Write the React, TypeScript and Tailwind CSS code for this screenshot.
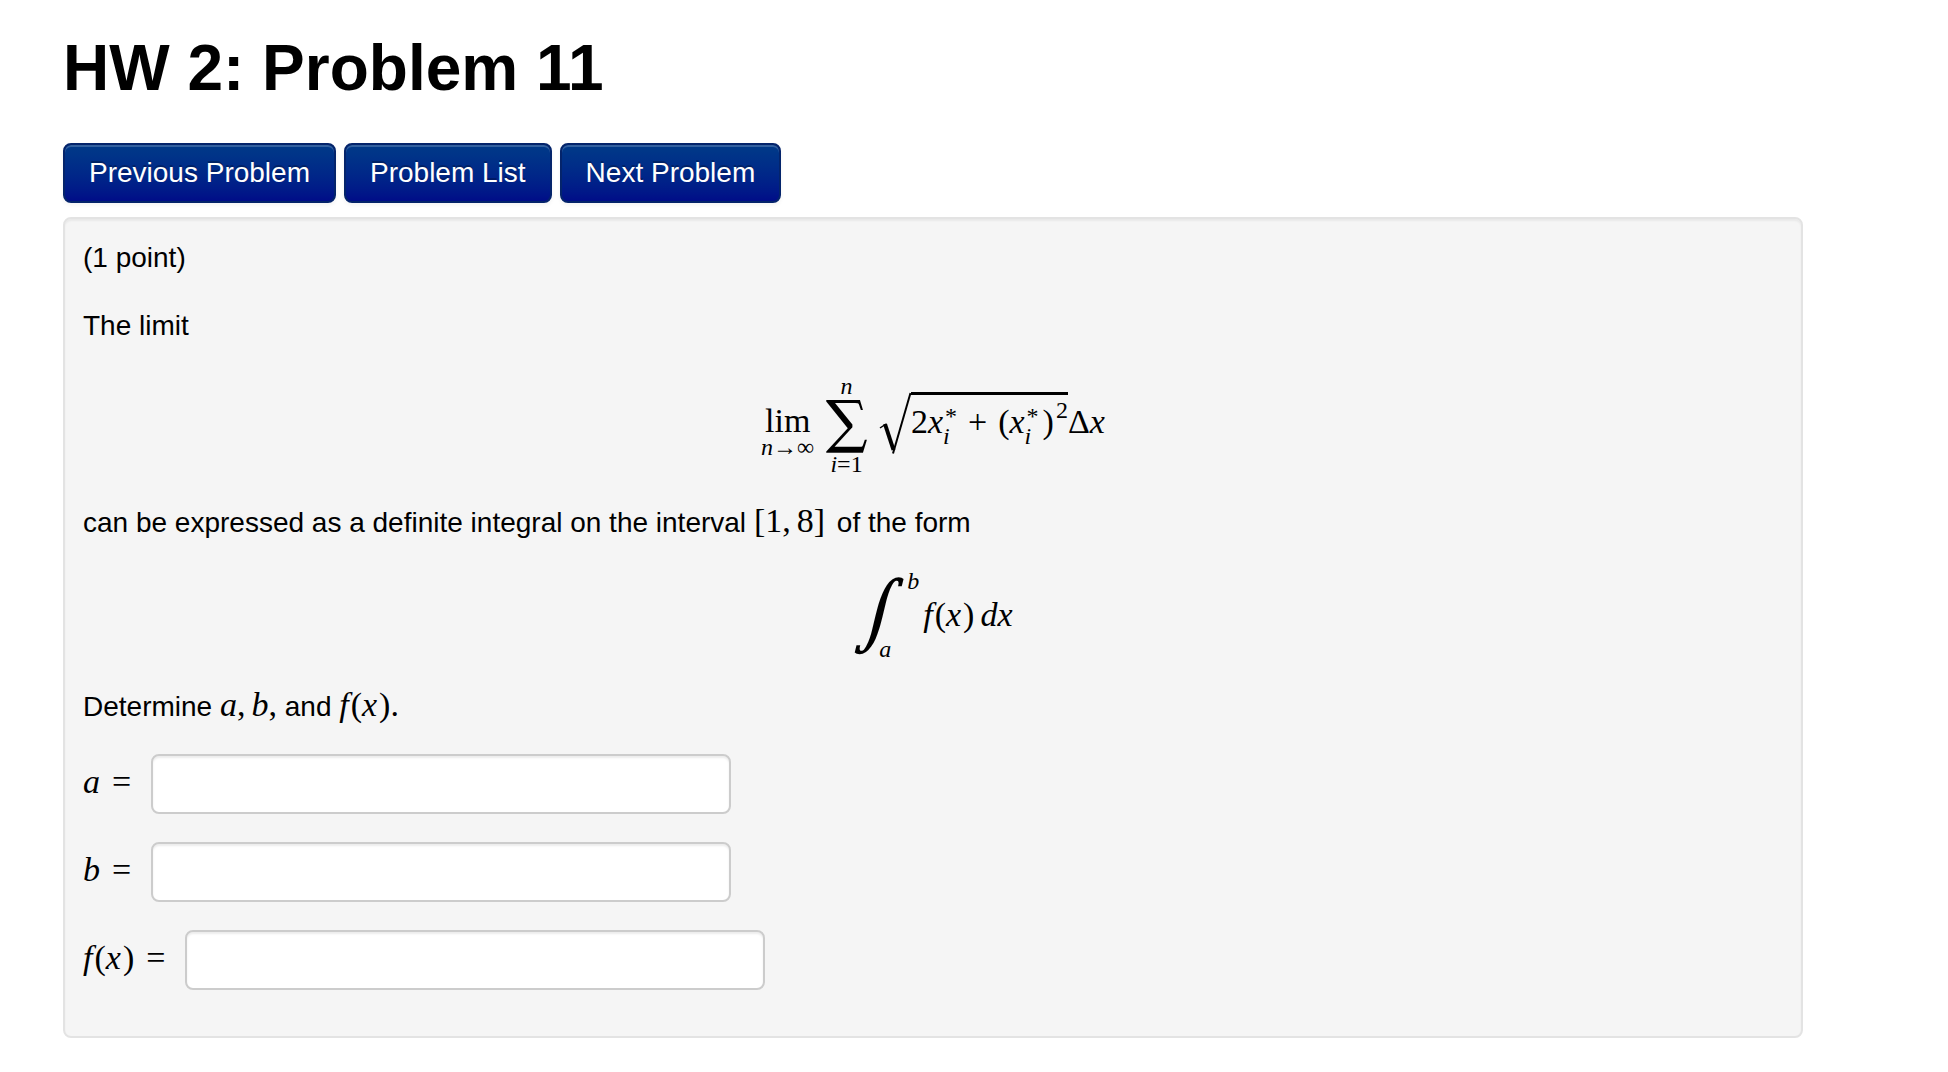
import type { ReactNode } from "react";

function V({ children }: { children: ReactNode }) {
  return <i className="italic">{children}</i>;
}

function Math({ children }: { children: ReactNode }) {
  return <span className="font-['Liberation_Serif',serif] text-[34px] leading-none whitespace-nowrap">{children}</span>;
}

function Fx() {
  return (
    <>
      <V>f</V>
      <span className="ml-0.5">(</span>
      <V>x</V>
      <span className="ml-0.5">)</span>
    </>
  );
}

function XiStar() {
  return (
    <span className="flex items-center">
      <V>x</V>
      <span className="flex flex-col text-[24px] leading-5">
        <span className="pl-0.5 pt-2">*</span>
        <V>i</V>
      </span>
    </span>
  );
}

function LimitFormula() {
  return (
    <div className="flex items-center justify-center font-['Liberation_Serif',serif] text-[34px] leading-9">
      <div className="flex flex-col items-center pt-4">
        <span className="leading-7">lim</span>
        <span className="text-[24px] leading-6">
          <V>n</V>→∞
        </span>
      </div>
      <div className="ml-2 flex flex-col items-center text-[24px] leading-6">
        <V>n</V>
        <span className="font-['DejaVu_Math_TeX_Gyre','Liberation_Serif',serif] text-[50px] leading-[54px]">∑</span>
        <span>
          <V>i</V>=1
        </span>
      </div>
      <div className="ml-2 flex items-start pb-1">
        <svg className="h-[62px] w-8" viewBox="0 0 32 62" fill="none" stroke="#000" aria-hidden="true">
          <path d="M1 36 L7 32" strokeWidth="1.500" />
          <path d="M6 32 L14.500 58" strokeWidth="4" />
          <path d="M14 61.500 L31.500 1" strokeWidth="2" />
        </svg>
        <div className="flex h-[62px] items-center border-t-[3px] border-black pb-1.5">
          <span>2</span>
          <XiStar />
          <span className="mx-[11px]">+</span>
          <span>(</span>
          <XiStar />
          <span className="ml-1">)</span>
          <span className="mb-6 ml-0.5 text-[24px] leading-6">2</span>
        </div>
        <div className="flex h-[62px] items-center pb-[3px]">
          <span>Δ</span>
          <V>x</V>
        </div>
      </div>
    </div>
  );
}

function IntegralFormula() {
  return (
    <div className="flex items-center justify-center font-['Liberation_Serif',serif] text-[34px] leading-9">
      <span className="font-['DejaVu_Math_TeX_Gyre','Liberation_Serif',serif] text-[70px] leading-[92px] italic">∫</span>
      <div className="-ml-4 flex h-[92px] flex-col justify-between text-[24px] leading-6">
        <span className="pl-7">
          <V>b</V>
        </span>
        <V>a</V>
      </div>
      <span className="ml-1">
        <Fx />
        <span className="ml-1.5">
          <V>dx</V>
        </span>
      </span>
    </div>
  );
}

function AnswerRow({ id, wide, children }: { id: string; wide?: boolean; children: ReactNode }) {
  return (
    <div className="flex items-center">
      <label htmlFor={id} className={wide ? "w-[102px]" : "w-[68px]"}>
        <Math>
          {children}
          <span className="ml-3">=</span>
        </Math>
      </label>
      <input
        id={id}
        type="text"
        className="h-[60px] w-[580px] rounded-lg border-2 border-[#ccc] bg-white px-3 shadow-[inset_0_2px_2px_rgba(0,0,0,0.075)] outline-none"
      />
    </div>
  );
}

export default function App() {
  return (
    <main className="min-h-screen bg-white pl-[63px] pr-[145px] pt-8 font-['Liberation_Sans',sans-serif] text-[28px] leading-10 text-black">
      <h1 className="text-[64px] font-bold leading-[72px]">HW 2: Problem 11</h1>
      <nav className="mt-[39px] flex gap-2">
        {["Previous Problem", "Problem List", "Next Problem"].map((t) => (
          <button
            key={t}
            type="button"
            className="h-[60px] rounded-lg border-2 border-[#04246b] bg-linear-to-b from-[#003a88] to-[#000c88] px-6 text-white shadow-[inset_0_2px_0_rgba(255,255,255,0.2),0_2px_4px_rgba(0,0,0,0.05)] [text-shadow:0_-2px_0_rgba(0,0,0,0.25)]"
          >
            {t}
          </button>
        ))}
      </nav>
      <section className="mt-3.5 rounded-lg border-2 border-[#e3e3e3] bg-[#f5f5f5] px-[18px] pb-[46px] pt-[19px] shadow-[inset_0_2px_2px_rgba(0,0,0,0.05)]">
        <p>(1 point)</p>
        <p className="mt-7">The limit</p>
        <div className="mb-[27px] mt-7">
          <LimitFormula />
        </div>
        <p>
          can be expressed as a definite integral on the interval{" "}
          <Math>
            [1,<span className="ml-1.5 mr-1">8]</span>
          </Math>{" "}
          of the form
        </p>
        <div className="my-[26px]">
          <IntegralFormula />
        </div>
        <p>
          Determine{" "}
          <Math>
            <V>a</V>,
            <span className="ml-1.5">
              <V>b</V>,
            </span>
          </Math>{" "}
          and{" "}
          <Math>
            <Fx />.
          </Math>
        </p>
        <form className="mt-[27px] flex flex-col gap-7">
          <AnswerRow id="answer-a">
            <V>a</V>
          </AnswerRow>
          <AnswerRow id="answer-b">
            <V>b</V>
          </AnswerRow>
          <AnswerRow id="answer-fx" wide>
            <Fx />
          </AnswerRow>
        </form>
      </section>
    </main>
  );
}
